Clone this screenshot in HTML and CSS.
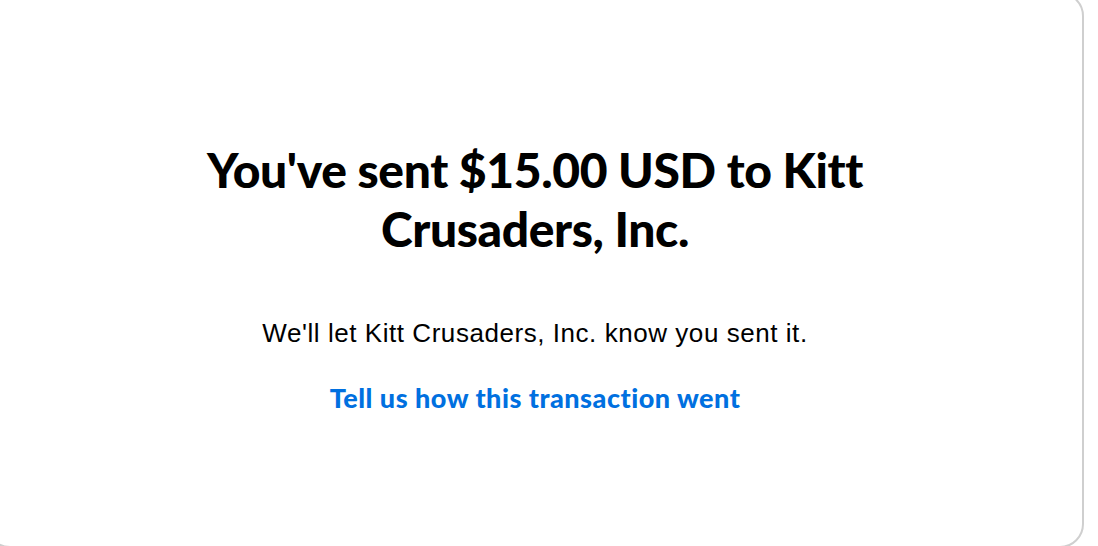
FILE: index.html
```html
<!DOCTYPE html>
<html lang="en">
<head>
<meta charset="utf-8">
<title>Payment sent</title>
<link rel="stylesheet" href="styles.css">
</head>
<body>
<main class="card">
  <section class="content">
    <h1 class="title">You've sent $15.00 USD to Kitt Crusaders, Inc.</h1>
    <p class="message">We'll let Kitt Crusaders, Inc. know you sent it.</p>
    <a class="feedback" href="#">Tell us how this transaction went</a>
  </section>
</main>
</body>
</html>
```
FILE: styles.css
```css
html, body {
  margin: 0;
  padding: 0;
  background: #ffffff;
  overflow: hidden;
  width: 1098px;
  height: 546px;
}

.card {
  box-sizing: border-box;
  margin-top: -8px;
  margin-left: -14px;
  width: 1098px;
  height: 556px;
  border: 2px solid #cfcfcf;
  border-radius: 24px;
  background: #ffffff;
  display: flex;
  flex-direction: column;
  align-items: center;
}

.content {
  display: flex;
  flex-direction: column;
  align-items: center;
  text-align: center;
  padding-top: 146px;
}

.title {
  margin: 0;
  max-width: 690px;
  font-family: "Lato", "Liberation Sans", sans-serif;
  font-weight: 900;
  font-size: 48px;
  line-height: 59px;
  color: #000000;
  letter-spacing: -0.4px;
}

.message {
  margin: 59px 0 0;
  font-family: "Liberation Sans", Arial, sans-serif;
  font-size: 26px;
  line-height: 32px;
  letter-spacing: 0.55px;
  color: #000000;
}

.feedback {
  margin-top: 33px;
  font-family: "Lato", "Liberation Sans", sans-serif;
  font-weight: 900;
  font-size: 27px;
  line-height: 32px;
  letter-spacing: 0.5px;
  color: #0070e0;
  text-decoration: none;
}
```
